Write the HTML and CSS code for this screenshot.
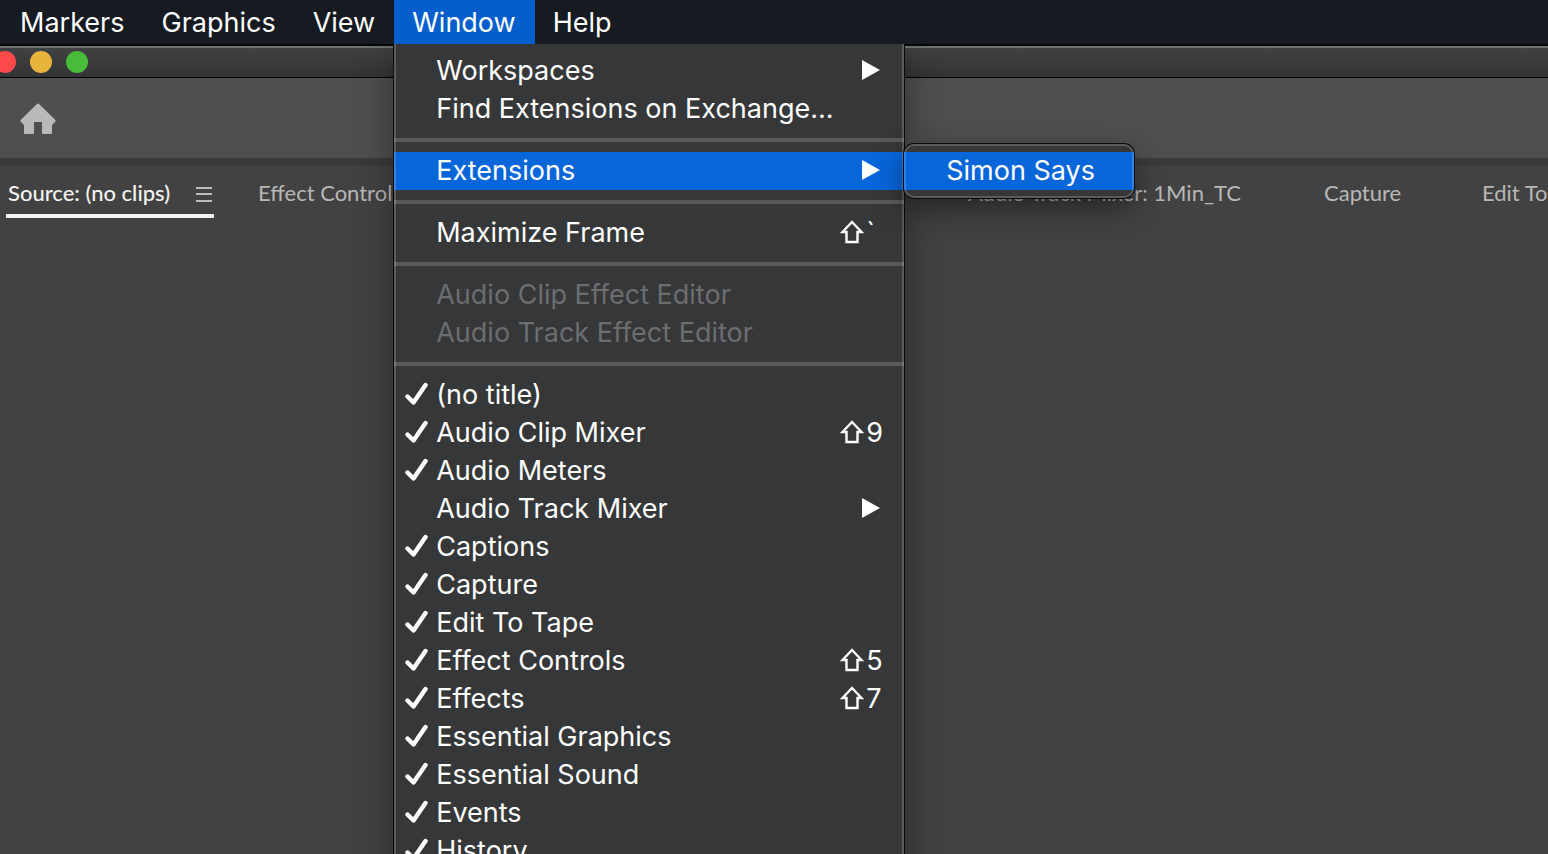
FILE: index.html
```
<!DOCTYPE html>
<html lang="en">
<head>
  <meta charset="UTF-8" />
  <meta name="viewport" content="width=device-width, initial-scale=1.0"/>
  <title>Window Menu</title>
  <link rel="stylesheet" href="styles.css">
</head>
<body>

  <!-- shared menu icons -->
  <svg class="icon-defs" aria-hidden="true">
    <symbol id="check" viewBox="0 0 24 24">
      <path d="M2.5 14.5 L8.5 20.5 L20.5 3" fill="none" stroke="#fff" stroke-width="4.4" stroke-linecap="round" stroke-linejoin="round"/>
    </symbol>
    <symbol id="arrow" viewBox="0 0 18 20">
      <path d="M0 0 L18 10 L0 20 Z" fill="#fff"/>
    </symbol>
    <symbol id="shift" viewBox="0 0 24 24">
      <path d="M12 2 L21.5 12 H17.5 V22 H6.5 V12 H2.5 Z" fill="none" stroke="#fff" stroke-width="2.4"/>
    </symbol>
  </svg>

  <nav class="menubar">
    <button class="menubar-item">Markers</button>
    <button class="menubar-item">Graphics</button>
    <button class="menubar-item">View</button>
    <div class="menubar-open">
      <button class="menubar-item active">Window</button>

      <div class="menu">
        <button class="menu-item"><span class="label">Workspaces</span><svg class="arrow"><use href="#arrow"/></svg></button>
        <button class="menu-item"><span class="label">Find Extensions on Exchange...</span></button>
        <hr>
        <div class="menu-parent">
          <button class="menu-item selected"><span class="label">Extensions</span><svg class="arrow"><use href="#arrow"/></svg></button>
          <div class="submenu">
            <button class="menu-item selected"><span class="label">Simon Says</span></button>
          </div>
        </div>
        <hr>
        <button class="menu-item"><span class="label">Maximize Frame</span><span class="shortcut"><svg><use href="#shift"/></svg>`</span></button>
        <hr>
        <button class="menu-item" disabled><span class="label">Audio Clip Effect Editor</span></button>
        <button class="menu-item" disabled><span class="label">Audio Track Effect Editor</span></button>
        <hr>
        <button class="menu-item"><svg class="check"><use href="#check"/></svg><span class="label">(no title)</span></button>
        <button class="menu-item"><svg class="check"><use href="#check"/></svg><span class="label">Audio Clip Mixer</span><span class="shortcut"><svg><use href="#shift"/></svg>9</span></button>
        <button class="menu-item"><svg class="check"><use href="#check"/></svg><span class="label">Audio Meters</span></button>
        <button class="menu-item"><span class="label">Audio Track Mixer</span><svg class="arrow"><use href="#arrow"/></svg></button>
        <button class="menu-item"><svg class="check"><use href="#check"/></svg><span class="label">Captions</span></button>
        <button class="menu-item"><svg class="check"><use href="#check"/></svg><span class="label">Capture</span></button>
        <button class="menu-item"><svg class="check"><use href="#check"/></svg><span class="label">Edit To Tape</span></button>
        <button class="menu-item"><svg class="check"><use href="#check"/></svg><span class="label">Effect Controls</span><span class="shortcut"><svg><use href="#shift"/></svg>5</span></button>
        <button class="menu-item"><svg class="check"><use href="#check"/></svg><span class="label">Effects</span><span class="shortcut"><svg><use href="#shift"/></svg>7</span></button>
        <button class="menu-item"><svg class="check"><use href="#check"/></svg><span class="label">Essential Graphics</span></button>
        <button class="menu-item"><svg class="check"><use href="#check"/></svg><span class="label">Essential Sound</span></button>
        <button class="menu-item"><svg class="check"><use href="#check"/></svg><span class="label">Events</span></button>
        <button class="menu-item"><svg class="check"><use href="#check"/></svg><span class="label">History</span></button>
      </div>
    </div>
    <button class="menubar-item">Help</button>
  </nav>

  <main class="app-window">
    <div class="titlebar">
      <button class="light red" aria-label="Close"></button>
      <button class="light yellow" aria-label="Minimize"></button>
      <button class="light green" aria-label="Zoom"></button>
    </div>

    <div class="toolbar">
      <button class="home" aria-label="Home">
        <svg width="36" height="32" viewBox="0 0 36 32">
          <path d="M17 0.9 Q18 0 19 0.9 L35.4 17 Q36 18 35.3 18.8 L32 22 V30 Q32 31 31 31 H23 Q22 31 22 30 V19 H14 V30 Q14 31 13 31 H5 Q4 31 4 30 V22 L0.7 18.8 Q0 18 0.6 17 Z" fill="#b9b9b9"/>
        </svg>
      </button>
    </div>

    <div class="tabs">
      <div class="tab current">
        <button class="tab-name">Source: (no clips)</button>
        <button class="panel-menu" aria-label="Panel menu">
          <svg width="16" height="16" viewBox="0 0 16 16">
            <path d="M0 2 H16 M0 8 H16 M0 15 H16" stroke="#bdbdbd" stroke-width="2"/>
          </svg>
        </button>
      </div>
      <div class="tab"><button class="tab-name">Effect Controls</button></div>
      <div class="tab"><button class="tab-name">Audio Track Mixer: 1Min_TC</button></div>
      <div class="tab"><button class="tab-name">Capture</button></div>
      <div class="tab"><button class="tab-name">Edit To Tape</button></div>
    </div>
  </main>

</body>
</html>
```

FILE: styles.css
```
* {
  box-sizing: border-box;
}
body {
  margin: 0;
  height: 100vh;
  overflow: hidden;
  display: flex;
  flex-direction: column;
  background: #424242;
  color: #ffffff;
  font-family: Inter, "Liberation Sans", sans-serif;
  font-size: 27px;
}
button {
  margin: 0;
  padding: 0;
  border: none;
  background: none;
  color: inherit;
  font: inherit;
  white-space: nowrap;
}
.icon-defs {
  position: absolute;
  width: 0;
  height: 0;
}

/* menu bar */
.menubar {
  display: flex;
  flex: none;
  height: 44px;
  padding-left: 2px;
  background: #161a21;
}
.menubar-item {
  height: 44px;
  padding: 0 19px 0 18px;
}
.menubar-item.active {
  background: #045ecb;
}
.menubar-open {
  position: relative;
}

/* drop-down */
.menu {
  position: absolute;
  z-index: 10;
  top: 44px;
  left: 0;
  width: 510px;
  padding: 8px 0;
  background: #363739;
  box-shadow: 0 0 0 1px #0b0b0c, 0 12px 36px rgba(0, 0, 0, 0.4);
  clip-path: inset(0 -300px -60px -60px);
}
.menu::after {
  content: "";
  position: absolute;
  inset: 0;
  border: 2px solid rgba(255, 255, 255, 0.18);
  border-top: none;
  pointer-events: none;
}
.menu hr {
  height: 4px;
  margin: 10px 0;
  border: none;
  background: #58595b;
}
.menu-item {
  position: relative;
  display: flex;
  align-items: center;
  width: 100%;
  height: 38px;
  padding: 0 20px 2px 42px;
  text-align: left;
}
.menu-item .label {
  flex: 1;
}
.menu-item:disabled {
  color: #6c6d6f;
}
.menu-item.selected {
  background: #0866db;
}
.menu-item .check {
  width: 24px;
  height: 24px;
  margin: 0 7px 0 -31px;
}
.menu-item .arrow {
  width: 18px;
  height: 20px;
  margin-right: 4px;
}
.shortcut {
  display: flex;
  align-items: center;
  gap: 2px;
  width: 44px;
}
.shortcut svg {
  width: 24px;
  height: 24px;
}
.menu-parent {
  position: relative;
}
.submenu {
  position: absolute;
  z-index: 20;
  top: -8px;
  left: 100%;
  width: 230px;
  padding: 8px 0;
  border-radius: 10px;
  background: #363739;
  box-shadow: 0 0 0 1px #0b0b0c, 0 10px 30px rgba(0, 0, 0, 0.45);
}
.submenu::after {
  content: "";
  position: absolute;
  inset: 0;
  border: 2px solid rgba(255, 255, 255, 0.18);
  border-radius: 10px;
  pointer-events: none;
}

/* application window */
.app-window {
  flex: 1;
  border-top: 2px solid #05070a;
}
.titlebar {
  display: flex;
  align-items: center;
  gap: 14px;
  height: 32px;
  padding-bottom: 1px;
  border-top: 2px solid #6e7072;
  border-bottom: 1px solid #000000;
  background: linear-gradient(#404143, #333435);
}
.light {
  width: 22px;
  height: 22px;
  border-radius: 50%;
}
.light.red {
  margin-left: -6px;
  background: #fe4a4a;
}
.light.yellow {
  background: #e8b53c;
}
.light.green {
  background: #48bb3b;
}
.toolbar {
  display: flex;
  align-items: center;
  height: 80px;
  padding: 2px 20px 0;
  background: #4f4f4f;
}
.home svg {
  display: block;
}

/* panel tabs */
.tabs {
  display: grid;
  grid-template-columns: 250px 710px 356px 158px auto;
  padding: 8px 8px 0;
  border-top: 8px solid #3a3a3a;
  color: #b7b7b7;
  font-family: Lato, "Open Sans", sans-serif;
  font-size: 22px;
}
.tab {
  display: flex;
  align-items: center;
  justify-self: start;
  height: 44px;
  border-bottom: 4px solid transparent;
}
.tab-name {
  padding-bottom: 3px;
}
.tab.current {
  width: 208px;
  margin-left: -2px;
  padding: 0 2px;
  justify-content: space-between;
  border-bottom-color: #f2f2f2;
  color: #f2f2f2;
  font-weight: 500;
}
.panel-menu svg {
  display: block;
}
```
